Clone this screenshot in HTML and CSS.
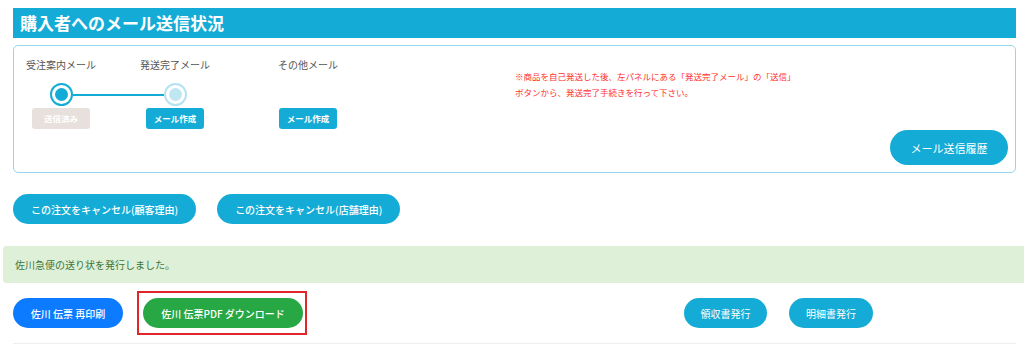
FILE: index.html
```html
<!DOCTYPE html>
<html lang="ja">
<head>
  <meta charset="UTF-8">
  <meta name="viewport" content="width=device-width, initial-scale=1.0">
  <title>購入者へのメール送信状況</title>
  <link rel="stylesheet" href="styles.css">
</head>
<body>
  <div class="page">
    <div class="heading">購入者へのメール送信状況</div>

    <div class="panel">
      <div class="steps">
        <div class="step">
          <div class="step-label">受注案内メール</div>
          <div class="dot dot-done"><span></span></div>
          <span class="step-btn step-btn-sent">送信済み</span>
        </div>
        <div class="step">
          <div class="step-label">発送完了メール</div>
          <div class="dot dot-next"><span></span></div>
          <span class="step-btn">メール作成</span>
        </div>
        <div class="step">
          <div class="step-label">その他メール</div>
          <div class="dot-space"></div>
          <span class="step-btn">メール作成</span>
        </div>
      </div>
      <div class="notes">
        ※商品を自己発送した後、左パネルにある「発送完了メール」の「送信」<br>
        ボタンから、発送完了手続きを行って下さい。
      </div>
      <button class="btn btn-cyan btn-history">メール送信履歴</button>
    </div>

    <div class="cancel-row">
      <button class="btn btn-cyan">この注文をキャンセル(顧客理由)</button>
      <button class="btn btn-cyan">この注文をキャンセル(店舗理由)</button>
    </div>

    <div class="alert">佐川急便の送り状を発行しました。</div>

    <div class="print-row">
      <button class="btn btn-blue">佐川 伝票 再印刷</button>
      <span class="highlight">
        <button class="btn btn-green">佐川 伝票PDF ダウンロード</button>
      </span>
      <div class="docs">
        <button class="btn btn-cyan">領収書発行</button>
        <button class="btn btn-cyan">明細書発行</button>
      </div>
    </div>

    <div class="rule"></div>
  </div>
</body>
</html>
```

FILE: styles.css
```css
body {
  margin: 0;
  font-family: "Noto Sans CJK JP", "Noto Sans", sans-serif;
  color: #555;
  background: #fff;
  overflow: hidden;
}

.page {
  padding: 8px 8px 0 13px;
}

.heading {
  height: 30px;
  line-height: 30px;
  padding-left: 7px;
  background: #14acd6;
  color: #fff;
  font-size: 17px;
  font-weight: bold;
}

/* メール送信パネル */
.panel {
  margin-top: 7px;
  height: 128px;
  box-sizing: border-box;
  border: 1px solid #94d6ea;
  border-radius: 5px;
  display: flex;
}

.steps {
  display: grid;
  grid-template-columns: 94px 134px 132px;
  padding-top: 12px;
}

.step {
  display: flex;
  flex-direction: column;
  align-items: center;
}

.step-label {
  font-size: 10px;
  line-height: 14px;
  color: #555;
}

.dot, .dot-space {
  width: 23px;
  height: 23px;
  margin-top: 11px;
  margin-bottom: 2px;
  box-sizing: border-box;
}

.dot {
  position: relative;
  border-radius: 50%;
  border: 2px solid #14acd6;
  display: flex;
  align-items: center;
  justify-content: center;
}

.dot span {
  width: 13px;
  height: 13px;
  border-radius: 50%;
  background: #14acd6;
}

.dot-done::after {
  content: "";
  position: absolute;
  left: 21px;
  top: 9px;
  width: 91px;
  height: 2px;
  background: #14acd6;
}

.dot-next {
  border-color: #b3e2f0;
}

.dot-next span {
  background: #bfe7f2;
}

.step-btn {
  width: 58px;
  height: 21px;
  line-height: 21px;
  text-align: center;
  border-radius: 3px;
  background: #14acd6;
  color: #fff;
  font-size: 8.5px;
  font-weight: bold;
}

.step-btn-sent {
  background: #e8e0dd;
}

.notes {
  margin-left: 141px;
  padding-top: 22px;
  font-size: 8.5px;
  line-height: 16px;
  color: #ff3030;
}

/* ボタン */
.btn {
  font-family: inherit;
  border: none;
  color: #fff;
  height: 30px;
  padding: 0 18px;
  border-radius: 15px;
  font-size: 10px;
  font-weight: 500;
  cursor: pointer;
}

.btn-cyan {
  background: #14acd6;
}

.btn-blue {
  background: #0d7bff;
  width: 110px;
  padding: 0;
}

.btn-green {
  background: #28a745;
  padding: 0;
  width: 160px;
}

.btn-history {
  margin-left: auto;
  align-self: flex-end;
  margin-right: 7px;
  margin-bottom: 7px;
  height: 35px;
  width: 118px;
  border-radius: 18px;
  font-size: 11px;
  font-weight: normal;
}

.cancel-row {
  margin-top: 21px;
  display: flex;
  gap: 21px;
}

.alert {
  margin: 22px -8px 0 -10px;
  height: 37px;
  padding-left: 12px;
  display: flex;
  align-items: center;
  background: #dff0d8;
  color: #3c763d;
  font-size: 10px;
  border-radius: 3px 0 0 3px;
}

.print-row {
  margin-top: 8px;
  display: flex;
  align-items: center;
}

.highlight {
  margin-left: 14px;
  border: 2px solid #e0262b;
  padding: 5px 2px 5px 4px;
  display: flex;
}

.docs {
  margin-left: 377px;
  display: flex;
  gap: 22px;
}

.docs .btn {
  width: 83px;
  padding: 0;
  font-weight: normal;
}

.docs .btn + .btn {
  width: 84px;
}

.rule {
  margin-top: 8px;
  border-top: 1px solid #eee;
}
```
